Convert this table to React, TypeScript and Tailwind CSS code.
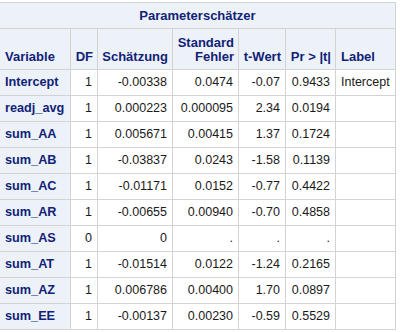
import React from "react";

const rows: [string, string, string, string, string, string, string][] = [
  ["Intercept", "1", "-0.00338", "0.0474", "-0.07", "0.9433", "Intercept"],
  ["readj_avg", "1", "0.000223", "0.000095", "2.34", "0.0194", ""],
  ["sum_AA", "1", "0.005671", "0.00415", "1.37", "0.1724", ""],
  ["sum_AB", "1", "-0.03837", "0.0243", "-1.58", "0.1139", ""],
  ["sum_AC", "1", "-0.01171", "0.0152", "-0.77", "0.4422", ""],
  ["sum_AR", "1", "-0.00655", "0.00940", "-0.70", "0.4858", ""],
  ["sum_AS", "0", "0", ".", ".", ".", ""],
  ["sum_AT", "1", "-0.01514", "0.0122", "-1.24", "0.2165", ""],
  ["sum_AZ", "1", "0.006786", "0.00400", "1.70", "0.0897", ""],
  ["sum_EE", "1", "-0.00137", "0.00230", "-0.59", "0.5529", ""],
];

const hd =
  "border border-[#d3d3d3] bg-[#edf2f9] text-[#112277] font-bold text-[13px] leading-[14px] align-bottom px-[4px] pb-[5px] whitespace-nowrap";
const num =
  "border border-[#d3d3d3] bg-white text-[#1a1a1a] text-[12.5px] text-right px-[5px] align-middle whitespace-nowrap";

export default function App() {
  return (
    <div className="w-[400px] h-[332px] bg-white overflow-hidden pt-[2px]" style={{ fontFamily: '"Liberation Sans", Arial, sans-serif' }}>
      <table className="table-fixed border-collapse -ml-px w-[396px]">
        <colgroup>
          <col className="w-[71px]" />
          <col className="w-[27px]" />
          <col className="w-[75px]" />
          <col className="w-[66px]" />
          <col className="w-[47px]" />
          <col className="w-[50px]" />
          <col className="w-[60px]" />
        </colgroup>
        <thead>
          <tr className="h-[26px]">
            <th colSpan={7} className="border border-[#d3d3d3] bg-[#edf2f9] text-[#112277] font-bold text-[13px] text-center align-middle">
              Parameterschätzer
            </th>
          </tr>
          <tr className="h-[41px]">
            <th className={hd + " text-left pl-[5px]"}>Variable</th>
            <th className={hd + " text-right"}>DF</th>
            <th className={hd + " text-right"}>Schätzung</th>
            <th className={hd + " text-right"}>
              Standard
              <br />
              Fehler
            </th>
            <th className={hd + " text-right"}>t-Wert</th>
            <th className={hd + " text-right"}>Pr &gt; |t|</th>
            <th className={hd + " text-left pl-[5px]"}>Label</th>
          </tr>
        </thead>
        <tbody>
          {rows.map((r) => (
            <tr key={r[0]} className="h-[26px]">
              <th className="border border-[#d3d3d3] bg-[#edf2f9] text-[#112277] font-bold text-[12.7px] text-left px-[5px] align-middle whitespace-nowrap">
                {r[0]}
              </th>
              <td className={num}>{r[1]}</td>
              <td className={num}>{r[2]}</td>
              <td className={num}>{r[3]}</td>
              <td className={num}>{r[4]}</td>
              <td className={num}>{r[5]}</td>
              <td className="border border-[#d3d3d3] bg-white text-[#1a1a1a] text-[12.5px] text-left px-[5px] align-middle whitespace-nowrap">
                {r[6]}
              </td>
            </tr>
          ))}
        </tbody>
      </table>
    </div>
  );
}
